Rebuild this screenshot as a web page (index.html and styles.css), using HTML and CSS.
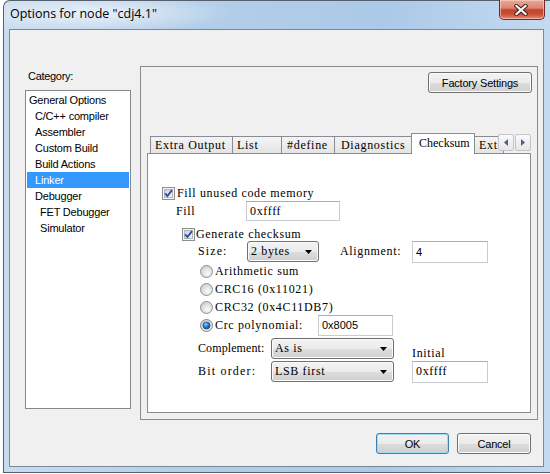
FILE: index.html
```html
<!DOCTYPE html>
<html>
<head>
<meta charset="utf-8">
<link rel="stylesheet" href="styles.css">
</head>
<body>
<svg class="defs" width="0" height="0">
  <defs>
    <linearGradient id="cbg" x1="0" y1="0" x2="1" y2="1">
      <stop offset="0" stop-color="#cdd1d7"/>
      <stop offset="1" stop-color="#f7f7f7"/>
    </linearGradient>
    <radialGradient id="rg" cx="0.6" cy="0.65" r="0.6">
      <stop offset="0" stop-color="#fbfbfb"/>
      <stop offset="1" stop-color="#d2d2d2"/>
    </radialGradient>
    <radialGradient id="rdot" cx="0.4" cy="0.35" r="0.7">
      <stop offset="0" stop-color="#8fd1ff"/>
      <stop offset="0.5" stop-color="#2a7ad0"/>
      <stop offset="1" stop-color="#0d3f86"/>
    </radialGradient>
    <symbol id="cb" viewBox="0 0 13 13">
      <rect x="0.5" y="0.5" width="12" height="12" fill="#f4f4f4" stroke="#8e8f8f"/>
      <rect x="2.5" y="2.5" width="8" height="8" fill="url(#cbg)" stroke="#b2b6bc"/>
      <path d="M3.2 6.4 L5.4 9 L10 3.2" fill="none" stroke="#2b50a6" stroke-width="1.9"/>
    </symbol>
    <symbol id="rad" viewBox="0 0 13 13">
      <circle cx="6.5" cy="6.5" r="6" fill="url(#rg)" stroke="#8e8f8f"/>
    </symbol>
    <symbol id="radon" viewBox="0 0 13 13">
      <circle cx="6.5" cy="6.5" r="6" fill="url(#rg)" stroke="#7f8588"/>
      <circle cx="6.5" cy="6.5" r="3.6" fill="url(#rdot)" stroke="#1c3f72" stroke-width="0.6"/>
    </symbol>
    <symbol id="dd" viewBox="0 0 7 4">
      <path d="M0 0 H7 L3.5 4 Z" fill="#000"/>
    </symbol>
  </defs>
</svg>

<div class="window">
  <div class="titlebar">
    <span class="title">Options for node "cdj4.1"</span>
  </div>
  <div class="close">
    <svg width="14" height="12" viewBox="0 0 14 12">
      <path d="M2.5 2 L11.5 10 M11.5 2 L2.5 10" stroke="#40201c" stroke-width="4.2" stroke-linecap="square"/>
      <path d="M2.5 2 L11.5 10 M11.5 2 L2.5 10" stroke="#ffffff" stroke-width="2.2" stroke-linecap="square"/>
    </svg>
  </div>

  <div class="client">
    <div class="main">
      <div class="left">
        <div class="cat-label">Category:</div>
        <ul class="catlist">
          <li class="l0">General Options</li>
          <li class="l1">C/C++ compiler</li>
          <li class="l1">Assembler</li>
          <li class="l1">Custom Build</li>
          <li class="l1">Build Actions</li>
          <li class="l1 sel">Linker</li>
          <li class="l1">Debugger</li>
          <li class="l2">FET Debugger</li>
          <li class="l2">Simulator</li>
        </ul>
      </div>

      <div class="panel">
        <div class="btn btn-factory">Factory Settings</div>

        <div class="tabstrip">
          <div class="tab t-extra">Extra Output</div>
          <div class="tab t-list">List</div>
          <div class="tab t-define">#define</div>
          <div class="tab t-diag">Diagnostics</div>
          <div class="tab t-check active">Checksum</div>
          <div class="tab t-ext">Ext</div>
          <div class="tab-scroll">
            <div class="sbtn">
              <svg width="4" height="7" viewBox="0 0 4 7"><path d="M4 0 V7 L0 3.5 Z" fill="#4c6386"/></svg>
            </div>
            <div class="sbtn">
              <svg width="4" height="7" viewBox="0 0 4 7"><path d="M0 0 V7 L4 3.5 Z" fill="#4c6386"/></svg>
            </div>
          </div>
        </div>

        <div class="page">
          <div class="row r1">
            <svg class="chk" width="13" height="13"><use href="#cb"/></svg>
            <span class="m lbl-cb">Fill unused code memory</span>
          </div>
          <div class="row r2">
            <span class="m lbl-fill">Fill</span>
            <div class="edit e-fill"><span class="m">0xffff</span></div>
          </div>
          <div class="row r3">
            <svg class="chk" width="13" height="13"><use href="#cb"/></svg>
            <span class="m lbl-cb2">Generate checksum</span>
          </div>
          <div class="row r4">
            <span class="m lbl-size">Size:</span>
            <div class="combo c-size"><span class="m">2 bytes</span><svg class="arrow" width="7" height="4"><use href="#dd"/></svg></div>
            <span class="m lbl-align">Alignment:</span>
            <div class="edit e-align"><span class="s">4</span></div>
          </div>
          <div class="row rr">
            <svg class="radio" width="13" height="13"><use href="#rad"/></svg>
            <span class="m lbl-r">Arithmetic sum</span>
          </div>
          <div class="row rr">
            <svg class="radio" width="13" height="13"><use href="#rad"/></svg>
            <span class="m lbl-r">CRC16 (0x11021)</span>
          </div>
          <div class="row rr">
            <svg class="radio" width="13" height="13"><use href="#rad"/></svg>
            <span class="m lbl-r">CRC32 (0x4C11DB7)</span>
          </div>
          <div class="row rr">
            <svg class="radio" width="13" height="13"><use href="#radon"/></svg>
            <span class="m lbl-r lbl-poly">Crc polynomial:</span>
            <div class="edit e-poly"><span class="s">0x8005</span></div>
          </div>
          <div class="row r9">
            <span class="m lbl-comp">Complement:</span>
            <div class="combo c-wide"><span class="m">As is</span><svg class="arrow" width="7" height="4"><use href="#dd"/></svg></div>
            <span class="m lbl-init">Initial</span>
          </div>
          <div class="row r10">
            <span class="m lbl-comp lbl-bit">Bit order:</span>
            <div class="combo c-wide"><span class="m">LSB first</span><svg class="arrow" width="7" height="4"><use href="#dd"/></svg></div>
            <div class="edit e-init"><span class="m">0xffff</span></div>
          </div>
        </div>
      </div>
    </div>

    <div class="footer">
      <div class="btn btn-ok">OK</div>
      <div class="btn btn-cancel">Cancel</div>
    </div>
  </div>
</div>
</body>
</html>
```

FILE: styles.css
```css
* { box-sizing: border-box; }
html, body { margin: 0; padding: 0; background: #ffffff; }
body {
  width: 550px;
  height: 474px;
  overflow: hidden;
  font-family: "Liberation Sans", Arial, sans-serif;
  font-size: 11px;
  color: #000;
}
.defs { position: absolute; width: 0; height: 0; }

.window {
  position: relative;
  margin-left: 3px;
  width: 547px;
  height: 473px;
  border: 1px solid #56606c;
  border-right: none;
  border-radius: 7px 0 0 0;
  padding: 0 6px 5px 5px;
  background:
    radial-gradient(ellipse 190px 26px at 90px 12px, rgba(255,255,255,0.65), rgba(255,255,255,0) 75%),
    linear-gradient(to right, #c9dcf0 0%, #b3cee9 35%, #abc9e8 70%, #c4daf0 100%);
}

.titlebar {
  height: 28px;
  display: flex;
  align-items: center;
  padding-left: 1px;
  padding-bottom: 4px;
}
.title {
  font-family: "Open Sans", "Liberation Sans", sans-serif;
  font-size: 12.5px;
  color: #000;
}

.close {
  position: absolute;
  top: -1px;
  right: 5px;
  width: 46px;
  height: 20px;
  border: 1px solid #6e2a22;
  border-top: none;
  border-radius: 0 0 5px 5px;
  background: linear-gradient(#e9a898 0%, #dc8674 42%, #c4432d 52%, #c94f36 75%, #e38e73 100%);
  box-shadow: inset 0 0 0 1px rgba(255,220,210,0.55);
  display: flex;
  align-items: center;
  justify-content: center;
  padding-right: 3px;
}

.client {
  width: 535px;
  height: 438px;
  border: 1px solid #7b8896;
  background: #f0f0f0;
  display: flex;
  flex-direction: column;
}

.main {
  display: flex;
  margin-top: 36px;
  padding-left: 15px;
}
.left { width: 106px; margin-right: 9px; }
.cat-label {
  margin-top: 3px;
  height: 14px;
  line-height: 14px;
  padding-left: 3px;
  letter-spacing: -0.3px;
}
.catlist {
  list-style: none;
  margin: 7px 0 0 0;
  padding: 1px 0 0 0;
  height: 319px;
  border: 1px solid #828790;
  background: #fff;
}
.catlist li {
  height: 16px;
  line-height: 16px;
  margin: 0 1px;
  letter-spacing: -0.2px;
  white-space: nowrap;
}
.catlist .l0 { padding-left: 2px; }
.catlist .l1 { padding-left: 8px; }
.catlist .l2 { padding-left: 13px; }
.catlist .sel { background: #3399ff; color: #fff; }

.panel {
  width: 398px;
  height: 354px;
  border: 1px solid #8c8c8c;
  padding: 5px 6px 0 6px;
  display: flex;
  flex-direction: column;
}

.btn {
  height: 21px;
  border: 1px solid #707070;
  border-radius: 3px;
  background: linear-gradient(#f2f2f2 0%, #ebebeb 50%, #dddddd 51%, #cfcfcf 100%);
  box-shadow: inset 0 0 0 1px #fbfbfb;
  display: flex;
  align-items: center;
  justify-content: center;
  letter-spacing: -0.2px;
}
.btn-factory {
  align-self: flex-end;
  width: 104px;
  margin-right: -1px;
}

.tabstrip {
  position: relative;
  margin-top: 40px;
  height: 20px;
  display: flex;
  align-items: flex-end;
  padding-left: 3px;
}
.tab {
  flex: none;
  height: 17px;
  border: 1px solid #898c95;
  border-bottom: none;
  margin-right: -1px;
  background: linear-gradient(#f4f4f4, #e4e4e4);
  font-family: "Liberation Serif", "Times New Roman", serif;
  font-size: 12px;
  letter-spacing: 0.7px;
  line-height: 16px;
  white-space: nowrap;
  overflow: hidden;
}
.t-extra { width: 83px; padding-left: 4px; }
.t-list { width: 50px; padding-left: 4px; }
.t-define { width: 54px; padding-left: 5px; }
.t-diag { width: 78px; padding-left: 6px; }
.t-check { width: 64px; padding-left: 7px; letter-spacing: 0; }
.t-ext { width: 30px; padding-left: 4px; }
.tab.active {
  position: relative;
  z-index: 2;
  height: 21px;
  margin-bottom: -1px;
  background: #ffffff;
  line-height: 18px;
}

.tab-scroll {
  position: absolute;
  right: 0;
  top: 1px;
  height: 17px;
  width: 33px;
  display: flex;
  gap: 1px;
  background: #f0f0f0;
  z-index: 3;
}
.sbtn {
  width: 16px;
  height: 17px;
  border: 1px solid #c4c4c4;
  border-radius: 2px;
  background: linear-gradient(#fafafa, #e6e6e6);
  display: flex;
  align-items: center;
  justify-content: center;
}

.page {
  width: 384px;
  height: 260px;
  border: 1px solid #898c95;
  background: #ffffff;
}

.m {
  font-family: "Liberation Serif", "Times New Roman", serif;
  font-size: 12px;
  letter-spacing: 0.65px;
  white-space: nowrap;
}
.s {
  font-family: "Liberation Sans", Arial, sans-serif;
  font-size: 11px;
}

.row { display: flex; align-items: center; }
.chk, .radio { flex: none; display: block; }

.r1 { margin-top: 32px; height: 14px; padding-left: 14px; }
.lbl-cb { margin-left: 2px; }
.r2 { margin-top: 1px; height: 20px; padding-left: 28px; }
.lbl-fill { width: 70px; }
.r3 { margin-top: 6px; height: 14px; padding-left: 34px; }
.lbl-cb2 { margin-left: 1px; }
.r4 { height: 21px; padding-left: 50px; }
.lbl-size { width: 49px; letter-spacing: 1.1px; }
.lbl-align { margin-left: 21px; width: 72px; }
.rr { height: 18px; padding-left: 52px; }
.lbl-r { margin-left: 2px; }
.lbl-poly { width: 103px; }
.r9 { margin-top: 4px; height: 21px; padding-left: 50px; }
.r10 { margin-top: 2px; height: 21px; padding-left: 50px; }
.lbl-comp { width: 73px; letter-spacing: 0.1px; }
.lbl-bit { letter-spacing: 1.2px; }
.lbl-init { align-self: flex-end; margin-left: 18px; line-height: 12px; height: 12px; }

.edit {
  flex: none;
  background: #fff;
  border: 1px solid #c9ccd2;
  border-top-color: #abadb3;
  padding-left: 3px;
  display: flex;
  align-items: center;
}
.e-fill { width: 94px; height: 20px; }
.e-align { width: 76px; height: 22px; }
.e-poly { width: 75px; height: 21px; }
.e-init { width: 76px; height: 22px; margin-left: 18px; }

.combo {
  flex: none;
  height: 21px;
  border: 1px solid #707070;
  border-radius: 3px;
  background: linear-gradient(#f3f3f3 0%, #ebebeb 50%, #dddddd 51%, #cfcfcf 100%);
  box-shadow: inset 0 0 0 1px #fafafa;
  padding-left: 3px;
  display: flex;
  align-items: center;
}
.combo .arrow { margin-left: auto; margin-right: 6px; display: block; }
.c-size { width: 72px; }
.c-wide { width: 123px; }

.footer {
  display: flex;
  justify-content: flex-end;
  gap: 8px;
  margin-top: 13px;
  padding-right: 12px;
}
.btn-ok {
  width: 73px;
  border-color: #3c7fb1;
  box-shadow: inset 0 0 0 1px #9fdcf6;
}
.btn-cancel { width: 74px; }
```
